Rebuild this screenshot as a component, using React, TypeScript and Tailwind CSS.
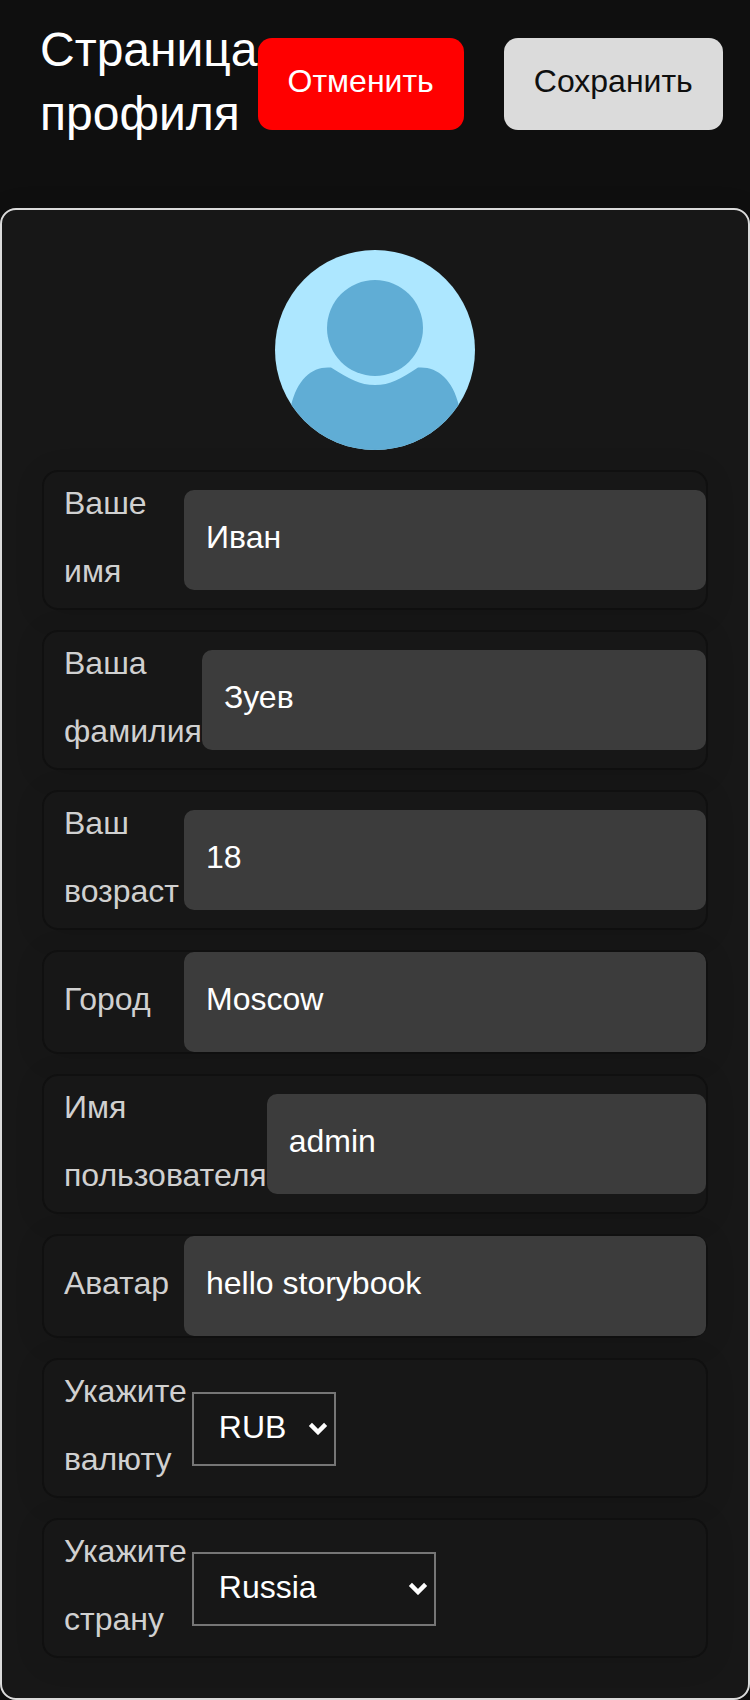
import { useId, useState } from "react";

type FieldProps = { label: string; initial: string };
type ChoiceProps = FieldProps & { options: string[]; width: string };

const ROW =
  "flex items-center rounded-2xl border-2 border-[#101010] bg-[#171717] pl-5 shadow-[0_4px_30px_rgba(0,0,0,0.1)]";
const LABEL = "-mt-[3px] mb-[3px] w-min min-w-[120px] shrink-0 leading-[68px] text-[#d0d0d0]";

function TextField({ label, initial }: FieldProps) {
  const id = useId();
  const [value, setValue] = useState(initial);
  return (
    <div className={ROW}>
      <label htmlFor={id} className={LABEL}>
        {label}
      </label>
      <input
        id={id}
        type="text"
        value={value}
        onChange={(e) => setValue(e.target.value)}
        className="h-[100px] w-full min-w-0 flex-1 rounded-[10px] bg-[#3c3c3c] px-[22px] pb-1.5 text-white outline-none"
      />
    </div>
  );
}

function ChoiceField({ label, initial, options, width }: ChoiceProps) {
  const id = useId();
  const [value, setValue] = useState(initial);
  return (
    <div className={ROW}>
      <label htmlFor={id} className={LABEL}>
        {label}
      </label>
      <div className={`relative mt-0.5 ml-[5px] ${width}`}>
        <select
          id={id}
          value={value}
          onChange={(e) => setValue(e.target.value)}
          className="block h-[74px] w-full appearance-none border-2 border-[#767676] bg-[#171717] pb-1 pl-[25px] text-white outline-none"
        >
          {options.map((option) => (
            <option key={option}>{option}</option>
          ))}
        </select>
        <svg
          aria-hidden="true"
          viewBox="0 0 20 14"
          className="pointer-events-none absolute top-[29px] right-2 h-3.5 w-5"
          fill="none"
          stroke="white"
          strokeWidth="4.4"
        >
          <path d="M2.4 3.4 L10 11 L17.6 3.4" />
        </svg>
      </div>
    </div>
  );
}

function Avatar() {
  return (
    <svg
      viewBox="0 0 200 200"
      role="img"
      aria-label="Аватар"
      className="size-[200px] self-center overflow-hidden rounded-full"
    >
      <rect width="200" height="200" fill="#ade7ff" />
      <circle cx="100" cy="78" r="48" fill="#60add5" />
      <path
        fill="#60add5"
        d="M16 156 C22 130 36 117.500 53 117.500 L56 117.500 C74 129 85 135 100 135 C115 135 126 129 143 117.500 L146 117.500 C163 117.500 178 130 184 156 L184 200 H16 Z"
      />
    </svg>
  );
}

export default function App() {
  return (
    <main className="min-h-screen bg-[#0f0f0f] font-['Liberation_Sans',Arial,sans-serif] text-[32px]">
      <header className="mb-10 flex items-center justify-between py-5 pr-7 pl-10">
        <h1 className="-mt-0.5 mb-0.5 w-min text-5xl leading-[64px] text-white">
          Страница профиля
        </h1>
        <div className="flex shrink-0 gap-10">
          <button
            type="button"
            className="h-[92px] rounded-[14px] bg-[#ff0000] px-[30px] pb-1.5 text-white"
          >
            Отменить
          </button>
          <button
            type="button"
            className="h-[92px] rounded-[14px] bg-[#dbdbdb] px-[30px] pb-1.5 text-[#0f0f0f]"
          >
            Сохранить
          </button>
        </div>
      </header>
      <form className="flex flex-col gap-5 rounded-2xl border-2 border-[#dbdbdb] bg-[#171717] p-10 shadow-[0_4px_30px_rgba(0,0,0,0.1)]">
        <Avatar />
        <TextField label="Ваше имя" initial="Иван" />
        <TextField label="Ваша фамилия" initial="Зуев" />
        <TextField label="Ваш возраст" initial="18" />
        <TextField label="Город" initial="Moscow" />
        <TextField label="Имя пользователя" initial="admin" />
        <TextField label="Аватар" initial="hello storybook" />
        <ChoiceField
          label="Укажите валюту"
          initial="RUB"
          options={["RUB", "EUR", "USD"]}
          width="w-36"
        />
        <ChoiceField
          label="Укажите страну"
          initial="Russia"
          options={["Russia", "Belarus", "Ukraine", "Kazakhstan", "Armenia"]}
          width="w-[244px]"
        />
      </form>
    </main>
  );
}
